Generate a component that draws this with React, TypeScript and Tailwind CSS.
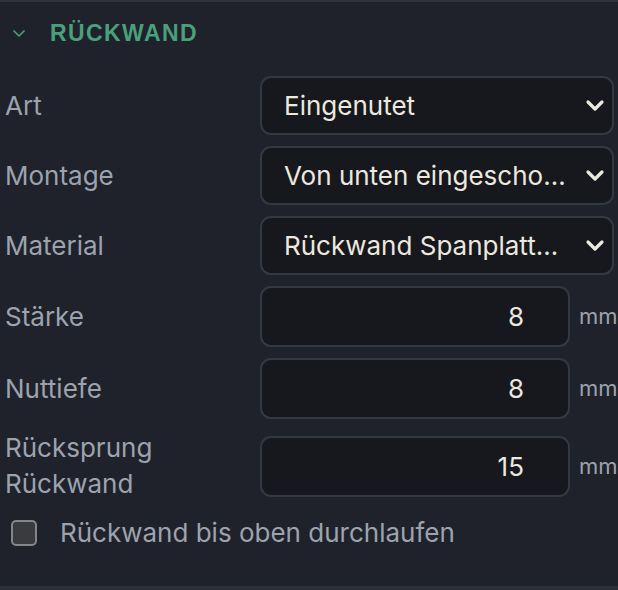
import React from "react";

const font = { fontFamily: "Inter, 'Noto Sans', sans-serif" };

function Chevron() {
  return (
    <svg width="20" height="14" viewBox="0 0 20 14" className="shrink-0">
      <polyline points="3,3 10,10 17,3" fill="none" stroke="#ece8df" strokeWidth="3.2" strokeLinecap="round" strokeLinejoin="round" />
    </svg>
  );
}

function SelectRow({ label, value }: { label: string; value: string }) {
  return (
    <div className="flex items-center">
      <div className="w-[260px] shrink-0 pl-[5px] text-[26px] leading-[36px] text-[#9ca3af]">{label}</div>
      <div className="flex h-[59px] w-[354px] items-center justify-between rounded-[11px] border-2 border-[#343843] bg-[#16181d] pl-[22px] pr-[7px]">
        <span className="truncate text-[26px] text-[#ece8df]">{value}</span>
        <Chevron />
      </div>
    </div>
  );
}

function NumRow({ label, value }: { label: React.ReactNode; value: string }) {
  return (
    <div className="flex items-center">
      <div className="w-[260px] shrink-0 pl-[5px] text-[26px] leading-[36px] text-[#9ca3af]">{label}</div>
      <div className="flex h-[61px] w-[310px] items-center justify-end rounded-[11px] border-2 border-[#343843] bg-[#16181d] pr-[44px]">
        <span className="text-[26px] text-[#ece8df]">{value}</span>
      </div>
      <span className="ml-[9px] text-[22px] text-[#9ca3af]">mm</span>
    </div>
  );
}

export default function App() {
  return (
    <div className="flex h-[590px] w-[618px] flex-col overflow-hidden bg-[#1f222a]" style={font}>
      <div className="h-[2px] shrink-0 bg-[#2f333c]" />
      <div className="flex h-[62px] items-center pl-[13px]">
        <svg width="12" height="9" viewBox="0 0 12 9" className="mr-[25px]">
          <polyline points="1,2 6,7 11,2" fill="none" stroke="#4a9f7c" strokeWidth="1.7" strokeLinecap="round" strokeLinejoin="round" />
        </svg>
        <span
          className="text-[23px] font-bold tracking-[1.4px] text-[#4a9f7c]"
          style={{ fontFamily: "'Liberation Sans', Arial, sans-serif" }}
        >
          RÜCKWAND
        </span>
      </div>
      <div className="mt-[12px] flex flex-col gap-[11px]">
        <SelectRow label="Art" value="Eingenutet" />
        <SelectRow label="Montage" value="Von unten eingescho…" />
        <SelectRow label="Material" value="Rückwand Spanplatt…" />
        <NumRow label="Stärke" value="8" />
        <NumRow label="Nuttiefe" value="8" />
        <NumRow label={<>Rücksprung<br />Rückwand</>} value="15" />
      </div>
      <div className="mt-[18px] flex h-[26px] items-center gap-[23px] pl-[11px]">
        <div className="h-[26px] w-[26px] shrink-0 rounded-[5px] border-2 border-[#85858a] bg-[#3a3b3e]" />
        <span className="text-[26px] leading-[26px] text-[#9ca3af]">Rückwand bis oben durchlaufen</span>
      </div>
      <div className="flex-1" />
      <div className="h-[4px] shrink-0 bg-[#2c3039]" />
    </div>
  );
}
